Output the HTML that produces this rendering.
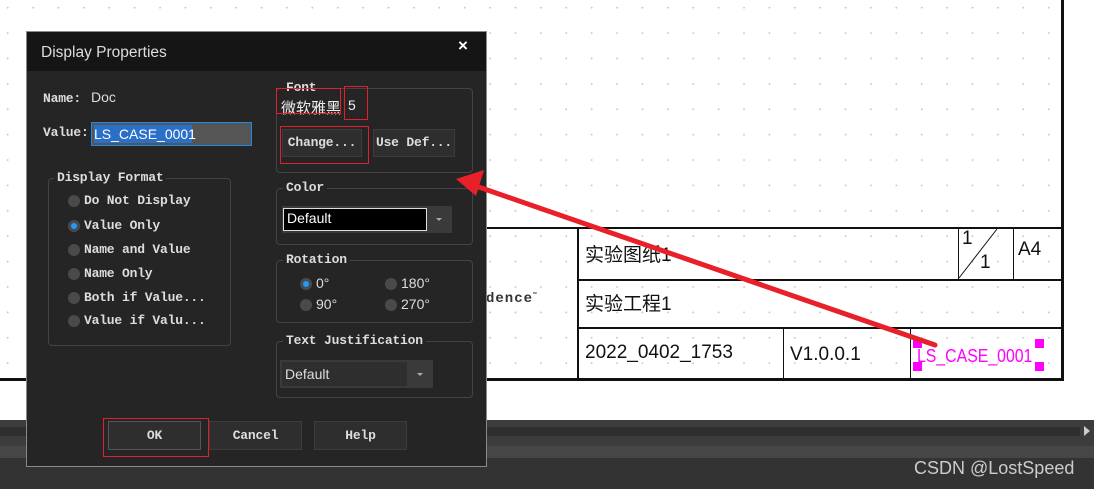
<!DOCTYPE html>
<html><head><meta charset="utf-8"><style>
*{margin:0;padding:0;box-sizing:border-box}
body{width:1094px;height:489px;overflow:hidden;position:relative;background:#fff;font-family:"Liberation Sans","Noto Sans CJK SC",sans-serif}
.a{position:absolute}
.grid{left:0;top:0;width:1062px;height:379px;background-image:radial-gradient(circle,#c8c8c8 0.9px,transparent 1.1px);background-size:25.4px 25.4px;background-position:-5px -5px}
.l{position:absolute;background:#111}
.m{font-family:"Liberation Mono","Noto Sans CJK SC",monospace;font-size:13px;color:#ddd;font-weight:bold;letter-spacing:-0.2px}
.grp{position:absolute;border:1px solid #444;border-radius:4px}
.gl{position:absolute;background:#252525;padding:0 3px;top:-9px;left:6px}
.rad{position:absolute;width:12px;height:12px;border-radius:50%;background:#4a4a4a}
.rad.on::after{content:"";position:absolute;left:3px;top:3px;width:6px;height:6px;border-radius:50%;background:#1e9bff}
.btn{position:absolute;background:#2e2e2e;border:1px solid #3c3c3c;text-align:center}
.cj{font-family:"Liberation Sans","Noto Sans CJK SC",sans-serif;font-size:19px;color:#111}
</style></head><body>
<div class="a grid"></div>
<div class="l" style="left:1061px;top:0;width:3px;height:381px"></div>
<div class="l" style="left:0;top:378px;width:1064px;height:3px"></div>
<div class="l" style="left:487px;top:227px;width:575px;height:2px"></div>
<div class="l" style="left:578px;top:279px;width:484px;height:2px"></div>
<div class="l" style="left:578px;top:327px;width:484px;height:2px"></div>
<div class="l" style="left:577px;top:227px;width:2px;height:152px"></div>
<div class="l" style="left:958px;top:227px;width:1px;height:52px"></div>
<div class="l" style="left:1013px;top:227px;width:1px;height:52px"></div>
<div class="l" style="left:783px;top:328px;width:1px;height:51px"></div>
<div class="l" style="left:910px;top:328px;width:1px;height:51px"></div>
<svg class="a" style="left:958px;top:228px" width="56" height="52"><line x1="1" y1="50" x2="39" y2="1" stroke="#111" stroke-width="1"/></svg>
<div class="a" style="left:962px;top:228px;font-size:19px;color:#111">1</div>
<div class="a" style="left:980px;top:252px;font-size:19px;color:#111">1</div>
<div class="a" style="left:1018px;top:239px;font-size:19px;color:#111">A4</div>
<div class="a cj" style="left:585px;top:240px">实验图纸1</div>
<div class="a cj" style="left:585px;top:289px">实验工程1</div>
<div class="a cj" style="left:585px;top:342px">2022_0402_1753</div>
<div class="a cj" style="left:790px;top:344px">V1.0.0.1</div>
<div class="a" style="left:917px;top:346px;font-size:18px;color:#f0f;transform:scaleX(0.88);transform-origin:0 0">LS_CASE_0001</div>
<div class="a" style="left:913px;top:339px;width:9px;height:9px;background:#f0f"></div>
<div class="a" style="left:913px;top:362px;width:9px;height:9px;background:#f0f"></div>
<div class="a" style="left:1035px;top:339px;width:9px;height:9px;background:#f0f"></div>
<div class="a" style="left:1035px;top:362px;width:9px;height:9px;background:#f0f"></div>
<div class="a" style="left:486px;top:291px;font-family:'Liberation Mono',monospace;font-weight:bold;font-size:14px;color:#333;letter-spacing:1px">dence<sup style="font-size:6px">™</sup></div>
<!-- bottom bars -->
<div class="a" style="left:0;top:420px;width:1094px;height:69px;background:#333"></div>
<div class="a" style="left:0;top:420px;width:1094px;height:26px;background:#3c3c3c"></div>
<div class="a" style="left:0;top:427px;width:1080px;height:9px;background:#2e2e2e"></div>
<div class="a" style="left:0;top:446px;width:1094px;height:12px;background:#464646"></div>
<div class="a" style="left:1084px;top:426px;width:0;height:0;border-left:6px solid #ccc;border-top:5px solid transparent;border-bottom:5px solid transparent"></div>
<div class="a" style="left:914px;top:458px;font-size:18px;color:#ccc">CSDN @LostSpeed</div>
<!-- dialog -->
<div class="a" style="left:26px;top:31px;width:461px;height:436px;background:#252525;border:1px solid #8a8a8a">
 <div class="a" style="left:0;top:0;width:459px;height:39px;background:#151515"></div>
 <div class="a" style="left:14px;top:12px;font-size:15.5px;color:#ddd">Display Properties</div>
 <div class="a" style="left:431px;top:4px;font-size:17px;color:#fff;font-weight:bold">×</div>
</div>
<div class="a m" style="left:43px;top:91px">Name:</div>
<div class="a" style="left:91px;top:89px;font-size:14px;color:#ddd">Doc</div>
<div class="a m" style="left:43px;top:125px">Value:</div>
<div class="a" style="left:91px;top:122px;width:161px;height:24px;background:#555;border:1px solid #1e8ae6"></div>
<div class="a" style="left:94px;top:125px;height:18px;width:98px;background:#2a6fc8;color:#fff;font-size:14px;line-height:18px">LS_CASE_0001</div>
<div class="grp" style="left:48px;top:178px;width:183px;height:168px"><div class="gl m" style="left:5px">Display Format</div></div>
<div class="rad" style="left:68px;top:195px"></div><div class="a m" style="left:84px;top:193px">Do Not Display</div>
<div class="rad on" style="left:68px;top:220px"></div><div class="a m" style="left:84px;top:218px">Value Only</div>
<div class="rad" style="left:68px;top:244px"></div><div class="a m" style="left:84px;top:242px">Name and Value</div>
<div class="rad" style="left:68px;top:268px"></div><div class="a m" style="left:84px;top:266px">Name Only</div>
<div class="rad" style="left:68px;top:292px"></div><div class="a m" style="left:84px;top:290px">Both if Value...</div>
<div class="rad" style="left:68px;top:315px"></div><div class="a m" style="left:84px;top:313px">Value if Valu...</div>
<div class="grp" style="left:276px;top:88px;width:197px;height:85px"><div class="gl m">Font</div></div>
<div class="a" style="left:281px;top:97px;font-size:15px;color:#eee;font-family:'Noto Sans CJK SC',sans-serif">微软雅黑</div>
<div class="a" style="left:348px;top:97px;font-size:14px;color:#eee">5</div>
<div class="a" style="left:276px;top:88px;width:65px;height:26px;border:1px solid #e0202a"></div>
<div class="a" style="left:344px;top:86px;width:24px;height:34px;border:1px solid #e0202a"></div>
<div class="btn m" style="left:282px;top:129px;width:80px;height:28px;line-height:26px">Change...</div>
<div class="btn m" style="left:373px;top:129px;width:82px;height:28px;line-height:26px">Use Def...</div>
<div class="a" style="left:280px;top:126px;width:89px;height:38px;border:1px solid #e0202a"></div>
<div class="grp" style="left:276px;top:188px;width:197px;height:57px"><div class="gl m">Color</div></div>
<div class="a" style="left:282px;top:206px;width:170px;height:27px;background:#3a3a3a"></div>
<div class="a" style="left:283px;top:208px;width:144px;height:23px;background:#000;border:1px solid #ddd;color:#fff;font-size:14px;padding-left:3px;line-height:19px">Default</div>
<div class="a" style="left:436px;top:218px;border-top:3px solid #aaa;border-left:3px solid transparent;border-right:3px solid transparent"></div>
<div class="grp" style="left:276px;top:260px;width:197px;height:63px"><div class="gl m">Rotation</div></div>
<div class="rad on" style="left:300px;top:278px"></div><div class="a" style="left:316px;top:275px;color:#ddd;font-size:14px">0°</div>
<div class="rad" style="left:385px;top:278px"></div><div class="a" style="left:401px;top:275px;color:#ddd;font-size:14px">180°</div>
<div class="rad" style="left:300px;top:299px"></div><div class="a" style="left:316px;top:296px;color:#ddd;font-size:14px">90°</div>
<div class="rad" style="left:385px;top:299px"></div><div class="a" style="left:401px;top:296px;color:#ddd;font-size:14px">270°</div>
<div class="grp" style="left:276px;top:341px;width:197px;height:57px"><div class="gl m">Text Justification</div></div>
<div class="a" style="left:280px;top:360px;width:153px;height:28px;background:#3a3a3a"></div>
<div class="a" style="left:282px;top:362px;width:125px;height:24px;background:#2e2e2e;color:#ddd;font-size:14px;padding-left:3px;line-height:24px">Default</div>
<div class="a" style="left:417px;top:373px;border-top:3px solid #aaa;border-left:3px solid transparent;border-right:3px solid transparent"></div>
<div class="btn m" style="left:108px;top:421px;width:93px;height:29px;line-height:27px;border-color:#555">OK</div>
<div class="btn m" style="left:209px;top:421px;width:93px;height:29px;line-height:27px">Cancel</div>
<div class="btn m" style="left:314px;top:421px;width:93px;height:29px;line-height:27px">Help</div>
<div class="a" style="left:103px;top:418px;width:106px;height:39px;border:1px solid #e0202a"></div>
<!-- arrow -->
<svg class="a" style="left:0;top:0" width="1094" height="489"><line x1="935" y1="345" x2="470" y2="184" stroke="#e8202a" stroke-width="5" stroke-linecap="round"/><polygon points="456,179 484,170 476,196" fill="#e8202a"/></svg>
</body></html>
